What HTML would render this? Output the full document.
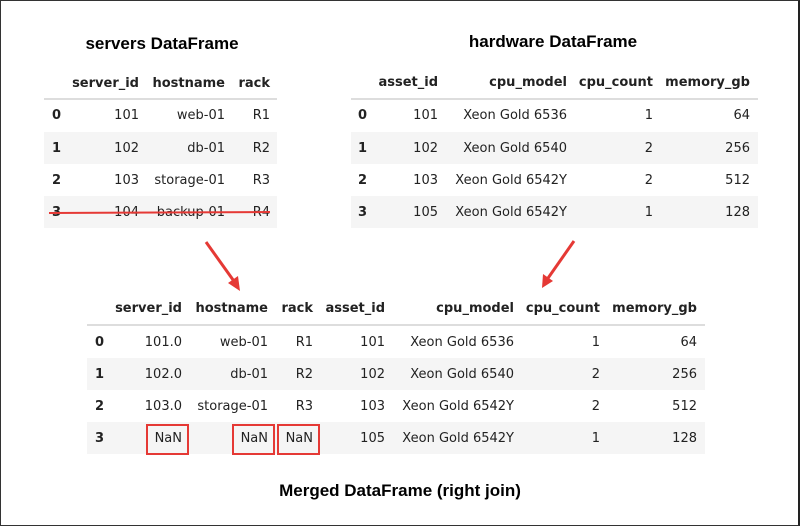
<!DOCTYPE html>
<html><head><meta charset="utf-8"><style>
*{margin:0;padding:0;box-sizing:border-box}
body{width:800px;height:526px;background:#fff;position:relative;overflow:hidden;font-family:"DejaVu Sans","Liberation Sans",sans-serif;font-size:13px;color:#222}
#frame{position:absolute;left:0;top:0;width:800px;height:526px;border:1px solid #333;border-right:2px solid #222}
.t{position:absolute;font-family:"Liberation Sans",sans-serif;font-weight:bold;font-size:17px;color:#000;text-align:center;white-space:nowrap}
.g{position:absolute;background:#f5f5f5}
.d{position:absolute;height:2px;background:#ddd}
.c{position:absolute;white-space:nowrap;line-height:16px;transform:translate(-100%,1px)}
.h{font-weight:bold}
.i{position:absolute;font-weight:bold;line-height:16px;transform:translateY(1px)}
.box{position:absolute;border:2px solid #e53935}
</style></head><body>
<div id="frame"></div>
<div class="t" style="left:62px;top:34px;width:200px">servers DataFrame</div>
<div class="t" style="left:443px;top:32px;width:220px">hardware DataFrame</div>
<div class="t" style="left:250px;top:481px;width:300px">Merged DataFrame (right join)</div>

<div class="d" style="left:44px;top:98px;width:233px"></div>
<div class="g" style="left:44px;top:132px;width:233px;height:32px"></div>
<div class="g" style="left:44px;top:196px;width:233px;height:32px"></div>
<div class="c h" style="left:139px;top:75px">server_id</div>
<div class="c h" style="left:225px;top:75px">hostname</div>
<div class="c h" style="left:270px;top:75px">rack</div>
<div class="i" style="left:52px;top:107px">0</div><div class="c" style="left:139px;top:107px">101</div><div class="c" style="left:225px;top:107px">web-01</div><div class="c" style="left:270px;top:107px">R1</div>
<div class="i" style="left:52px;top:140px">1</div><div class="c" style="left:139px;top:140px">102</div><div class="c" style="left:225px;top:140px">db-01</div><div class="c" style="left:270px;top:140px">R2</div>
<div class="i" style="left:52px;top:172px">2</div><div class="c" style="left:139px;top:172px">103</div><div class="c" style="left:225px;top:172px">storage-01</div><div class="c" style="left:270px;top:172px">R3</div>
<div class="i" style="left:52px;top:204px">3</div><div class="c" style="left:139px;top:204px">104</div><div class="c" style="left:225px;top:204px">backup-01</div><div class="c" style="left:270px;top:204px">R4</div>

<div class="d" style="left:351px;top:98px;width:407px"></div>
<div class="g" style="left:351px;top:132px;width:407px;height:32px"></div>
<div class="g" style="left:351px;top:196px;width:407px;height:32px"></div>
<div class="c h" style="left:438px;top:74px">asset_id</div>
<div class="c h" style="left:567px;top:74px">cpu_model</div>
<div class="c h" style="left:653px;top:74px">cpu_count</div>
<div class="c h" style="left:750px;top:74px">memory_gb</div>
<div class="i" style="left:358px;top:107px">0</div><div class="c" style="left:438px;top:107px">101</div><div class="c" style="left:567px;top:107px">Xeon Gold 6536</div><div class="c" style="left:653px;top:107px">1</div><div class="c" style="left:750px;top:107px">64</div>
<div class="i" style="left:358px;top:140px">1</div><div class="c" style="left:438px;top:140px">102</div><div class="c" style="left:567px;top:140px">Xeon Gold 6540</div><div class="c" style="left:653px;top:140px">2</div><div class="c" style="left:750px;top:140px">256</div>
<div class="i" style="left:358px;top:172px">2</div><div class="c" style="left:438px;top:172px">103</div><div class="c" style="left:567px;top:172px">Xeon Gold 6542Y</div><div class="c" style="left:653px;top:172px">2</div><div class="c" style="left:750px;top:172px">512</div>
<div class="i" style="left:358px;top:204px">3</div><div class="c" style="left:438px;top:204px">105</div><div class="c" style="left:567px;top:204px">Xeon Gold 6542Y</div><div class="c" style="left:653px;top:204px">1</div><div class="c" style="left:750px;top:204px">128</div>

<div class="d" style="left:87px;top:324px;width:618px"></div>
<div class="g" style="left:87px;top:358px;width:618px;height:32px"></div>
<div class="g" style="left:87px;top:422px;width:618px;height:32px"></div>
<div class="c h" style="left:182px;top:300px">server_id</div>
<div class="c h" style="left:268px;top:300px">hostname</div>
<div class="c h" style="left:313px;top:300px">rack</div>
<div class="c h" style="left:385px;top:300px">asset_id</div>
<div class="c h" style="left:514px;top:300px">cpu_model</div>
<div class="c h" style="left:600px;top:300px">cpu_count</div>
<div class="c h" style="left:697px;top:300px">memory_gb</div>
<div class="i" style="left:95px;top:334px">0</div><div class="c" style="left:182px;top:334px">101.0</div><div class="c" style="left:268px;top:334px">web-01</div><div class="c" style="left:313px;top:334px">R1</div><div class="c" style="left:385px;top:334px">101</div><div class="c" style="left:514px;top:334px">Xeon Gold 6536</div><div class="c" style="left:600px;top:334px">1</div><div class="c" style="left:697px;top:334px">64</div>
<div class="i" style="left:95px;top:366px">1</div><div class="c" style="left:182px;top:366px">102.0</div><div class="c" style="left:268px;top:366px">db-01</div><div class="c" style="left:313px;top:366px">R2</div><div class="c" style="left:385px;top:366px">102</div><div class="c" style="left:514px;top:366px">Xeon Gold 6540</div><div class="c" style="left:600px;top:366px">2</div><div class="c" style="left:697px;top:366px">256</div>
<div class="i" style="left:95px;top:398px">2</div><div class="c" style="left:182px;top:398px">103.0</div><div class="c" style="left:268px;top:398px">storage-01</div><div class="c" style="left:313px;top:398px">R3</div><div class="c" style="left:385px;top:398px">103</div><div class="c" style="left:514px;top:398px">Xeon Gold 6542Y</div><div class="c" style="left:600px;top:398px">2</div><div class="c" style="left:697px;top:398px">512</div>
<div class="i" style="left:95px;top:430px">3</div><div class="c" style="left:182px;top:430px">NaN</div><div class="c" style="left:268px;top:430px">NaN</div><div class="c" style="left:313px;top:430px">NaN</div><div class="c" style="left:385px;top:430px">105</div><div class="c" style="left:514px;top:430px">Xeon Gold 6542Y</div><div class="c" style="left:600px;top:430px">1</div><div class="c" style="left:697px;top:430px">128</div>
<div class="box" style="left:146px;top:424px;width:43px;height:31px"></div>
<div class="box" style="left:232px;top:424px;width:43px;height:31px"></div>
<div class="box" style="left:277px;top:424px;width:43px;height:31px"></div>

<svg style="position:absolute;left:0;top:0" width="800" height="526">
<line x1="49" y1="213" x2="270" y2="212" stroke="#e53935" stroke-width="2"/>
<line x1="206" y1="242" x2="236" y2="284" stroke="#e53935" stroke-width="3"/>
<polygon points="240,291 228,283 238,276" fill="#e53935"/>
<line x1="574" y1="241" x2="546" y2="281" stroke="#e53935" stroke-width="3"/>
<polygon points="542,288 543,274 553,281" fill="#e53935"/>
</svg>
</body></html>
